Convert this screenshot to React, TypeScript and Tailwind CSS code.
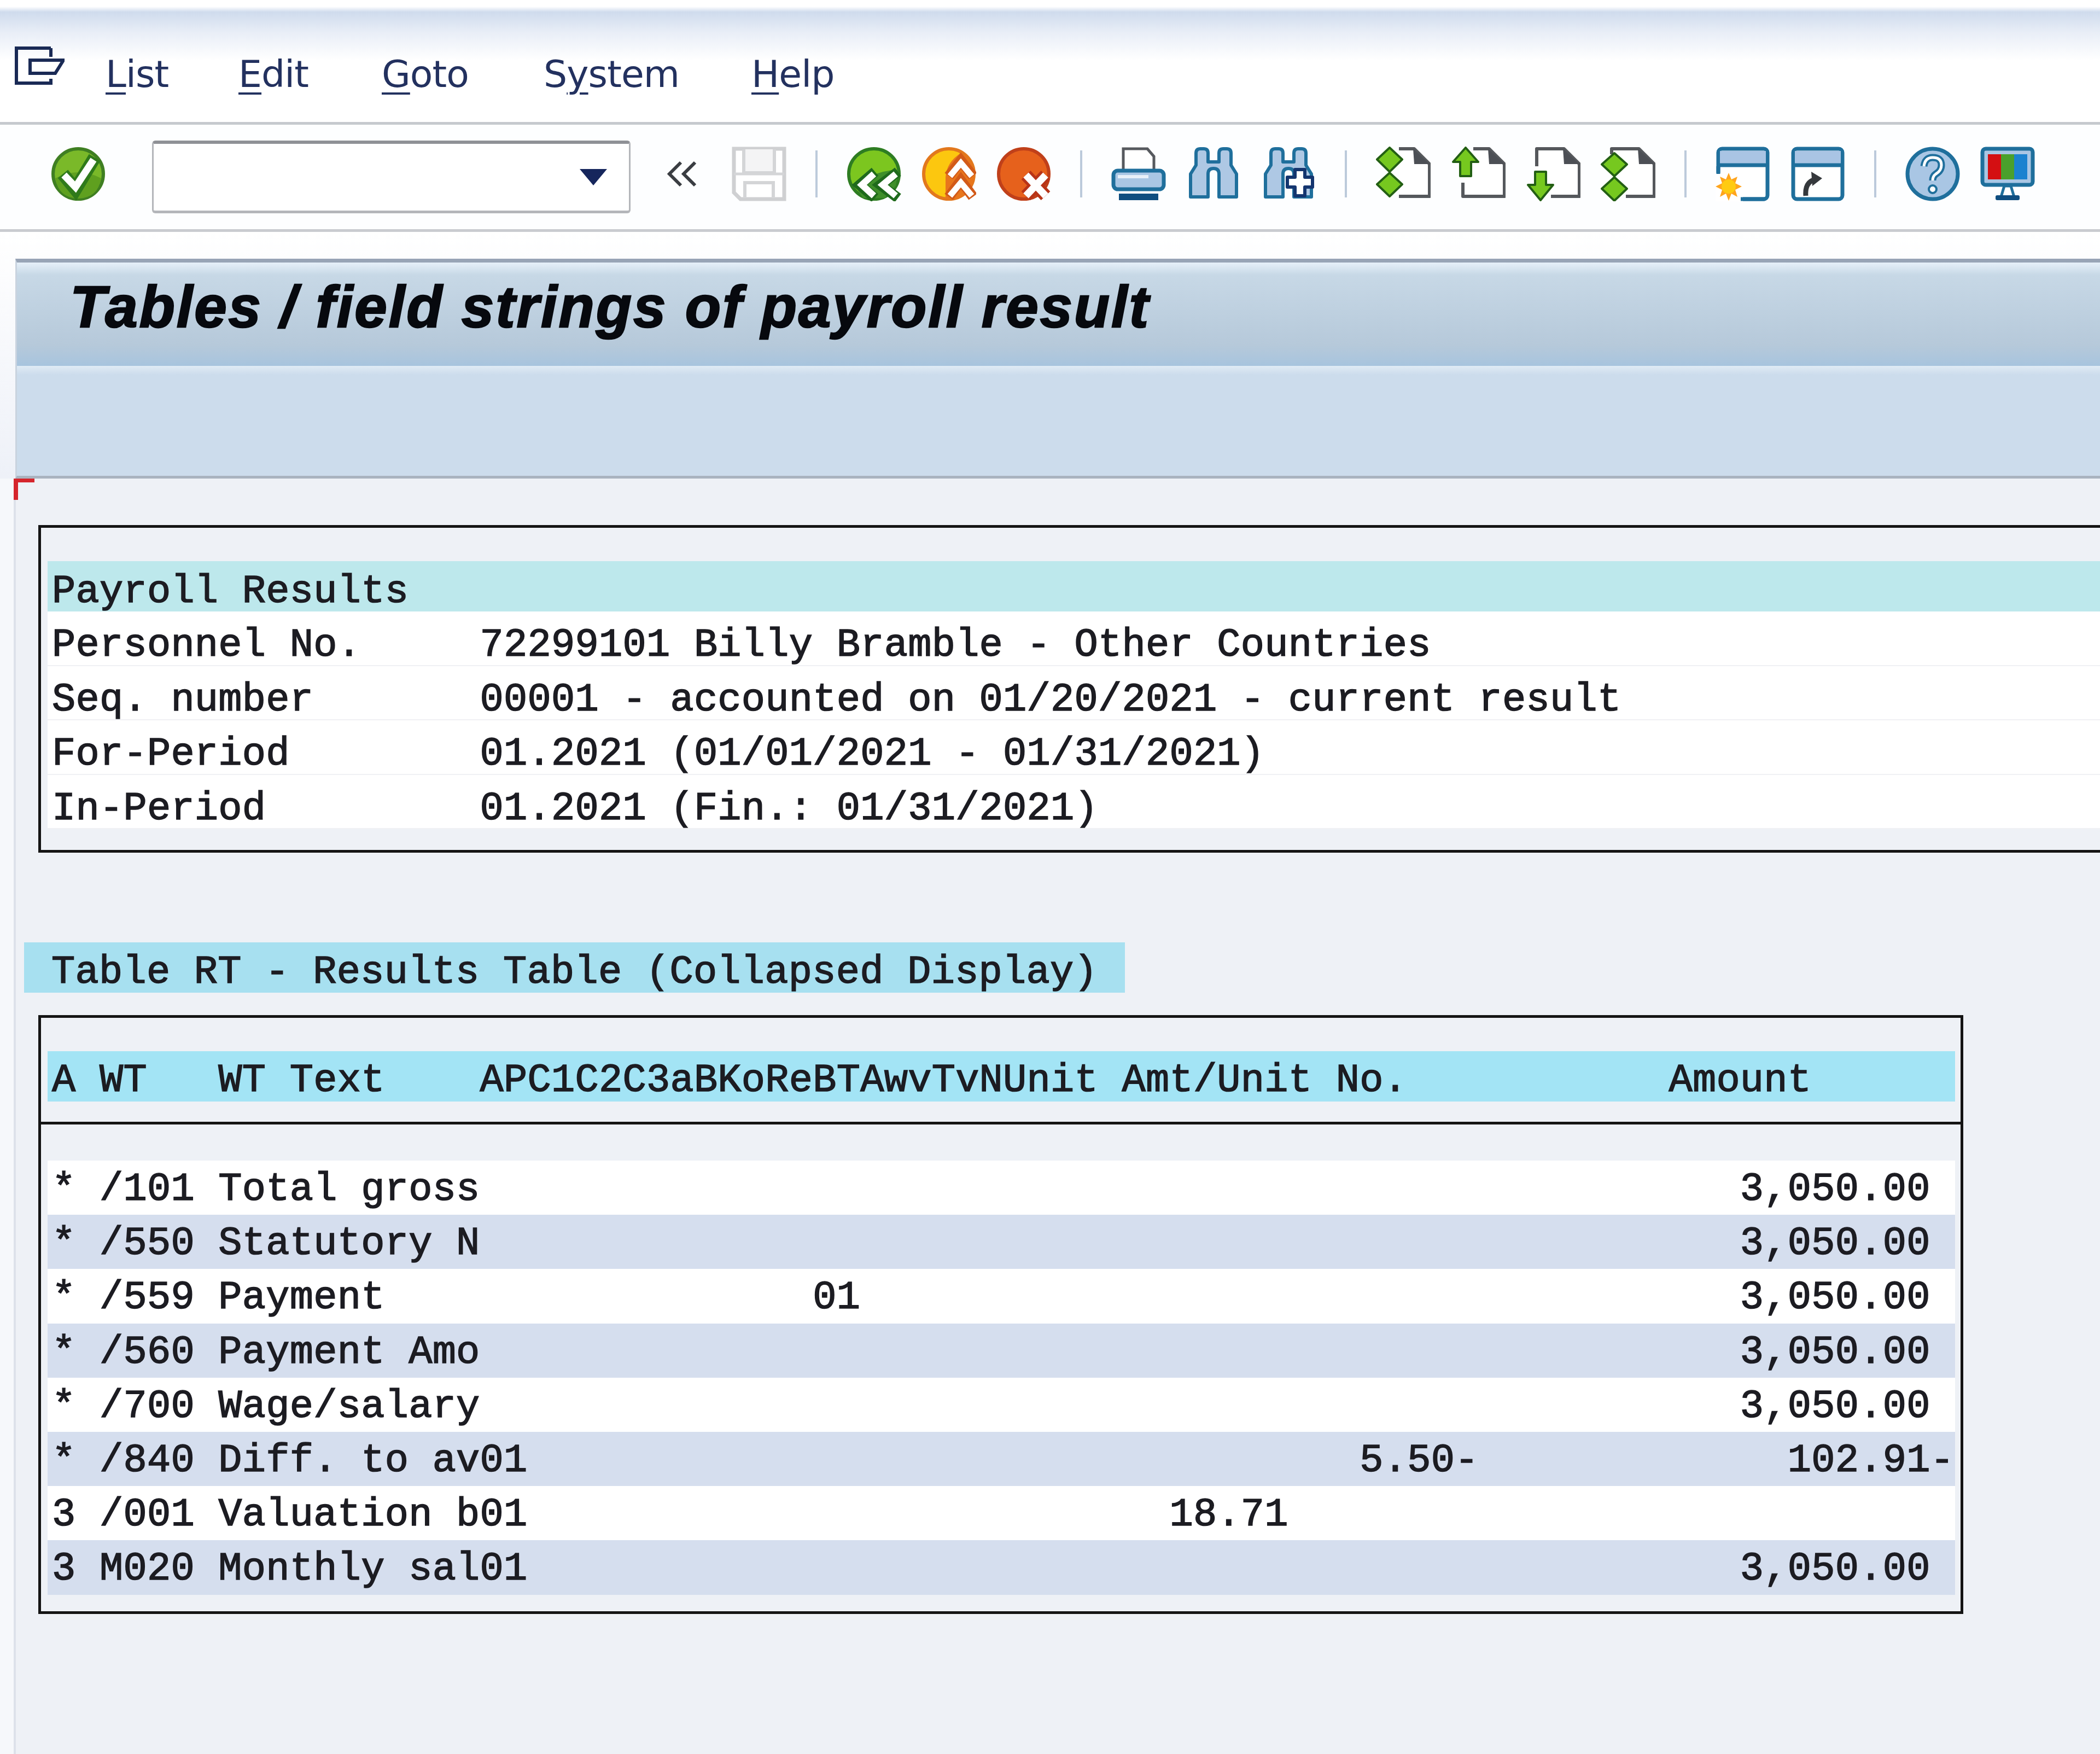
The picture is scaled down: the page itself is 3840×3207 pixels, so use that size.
import React from "react";

const Ic = ({ children }: { children: React.ReactNode }) => (
  <svg viewBox="0 0 100 100" className="w-[100px] h-[100px] shrink-0 mb-[12px]" fill="none">
    {children}
  </svg>
);

const Sep = () => <div className="w-[4px] h-[86px] mx-[53px] mb-[12px] bg-[#bccadb] shrink-0" />;

const Group = ({ children }: { children: React.ReactNode }) => (
  <div className="flex items-center gap-[37px] shrink-0">{children}</div>
);

const Fold = () => <path d="M68 4L98 32H70Z" fill="#4c4f55" />;
const docStroke = { stroke: "#55585c", strokeWidth: 6, strokeLinejoin: "round" as const };

const green = { fill: "#76c81f", stroke: "#235f14", strokeWidth: 4, strokeLinejoin: "round" as const };

const Diamond = ({ top, bot }: { top: number; bot: number }) => {
  const m = (top + bot) / 2;
  return <path d={`M25 ${top + 2}L48 ${m}L25 ${bot - 1}L2 ${m}Z`} {...green} />;
};

const Binoc = ({ plus }: { plus?: boolean }) => (
  <>
    <path
      d="M8 92V50L18 34V12Q18 4 26 4H32Q40 4 40 12V28H60V12Q60 4 68 4H74Q82 4 82 12V34L92 50V92H60V50Q60 40 50 40Q40 40 40 50V92Z"
      fill="#aec8e4"
      stroke="#1f6f9c"
      strokeWidth="6"
      strokeLinejoin="round"
    />
    {plus && (
      <path
        d="M62 42H80V56H94V74H80V90H62V74H48V56H62Z"
        fill="#fff"
        stroke="#14356f"
        strokeWidth="6"
        strokeLinejoin="round"
      />
    )}
  </>
);

const Win = () => (
  <>
    <rect x="5" y="4" width="90" height="92" rx="7" fill="#fff" stroke="#1f6f9c" strokeWidth="7" />
    <rect x="8" y="8" width="84" height="26" fill="#a9c4e4" />
    <path d="M5 34H95" stroke="#1f6f9c" strokeWidth="7" />
  </>
);

const u = "underline decoration-[4px] underline-offset-[10px]";

const infoRows = [
  "Personnel No.     72299101 Billy Bramble - Other Countries",
  "Seq. number       00001 - accounted on 01/20/2021 - current result",
  "For-Period        01.2021 (01/01/2021 - 01/31/2021)",
  "In-Period         01.2021 (Fin.: 01/31/2021)",
];

const tableRows = [
  "* /101 Total gross                                                     3,050.00",
  "* /550 Statutory N                                                     3,050.00",
  "* /559 Payment                  01                                     3,050.00",
  "* /560 Payment Amo                                                     3,050.00",
  "* /700 Wage/salary                                                     3,050.00",
  "* /840 Diff. to av01                                   5.50-             102.91-",
  "3 /001 Valuation b01                           18.71",
  "3 M020 Monthly sal01                                                   3,050.00",
];

const mono =
  "font-['Liberation_Mono',monospace] text-[72px] tracking-[0.27px] whitespace-pre text-[#1c1c22] [-webkit-text-stroke:1.6px_#1c1c22]";

export default function App() {
  return (
    <div className="w-[3840px] h-[3207px] overflow-hidden flex flex-col bg-[#f6f8fb]">
      {/* Menu bar */}
      <div className="h-[228px] shrink-0 border-b-[5px] border-[#c5c9ce] bg-[linear-gradient(180deg,#ffffff_0px,#ffffff_12px,#cfdbed_22px,#e9eef7_60px,#ffffff_110px)] flex items-center pl-[25px] pt-[46px]">
        <svg viewBox="0 0 93 72" className="w-[93px] h-[72px] shrink-0 -mt-[30px]" fill="none">
          <path d="M68 4H5V68H68V60" stroke="#1a2a55" strokeWidth="6" />
          <path d="M30 26H91L76 50H30Z" stroke="#1a2a55" strokeWidth="6" fill="#fff" />
          <path d="M68 4V20" stroke="#1a2a55" strokeWidth="6" />
        </svg>
        <div className="ml-[75px] flex font-['DejaVu_Sans',sans-serif] text-[68px] leading-none text-[#23315f] tracking-[-0.9px] mt-[2px]">
          <div className="w-[243px]"><span className={u}>L</span>ist</div>
          <div className="w-[262px]"><span className={u}>E</span>dit</div>
          <div className="w-[296px]"><span className={u}>G</span>oto</div>
          <div className="w-[380px]">S<span className={u}>y</span>stem</div>
          <div><span className={u}>H</span>elp</div>
        </div>
      </div>

      {/* Application toolbar */}
      <div className="h-[196px] shrink-0 border-b-[5px] border-[#c9cbd0] bg-[#fdfeff] flex items-center pl-[93px]">
        <Ic>
          <circle cx="50" cy="50" r="46" fill="#7ab929" stroke="#3f7f22" strokeWidth="6" />
          <path d="M8 58Q50 36 92 58Q86 94 50 95Q14 94 8 58Z" fill="#5fa01f" />
          <path d="M22 50L45 78L80 20" stroke="#2f7a1a" strokeWidth="24" strokeLinejoin="miter" />
          <path d="M24 52L45 74L78 24" stroke="#fff" strokeWidth="13" strokeLinejoin="miter" />
        </Ic>
        <div className="w-[875px] h-[133px] ml-[85px] shrink-0 bg-white rounded-[6px] border-[3px] border-[#b4b6ba] border-t-[6px] border-t-[#8f9196] border-b-[5px] flex items-center justify-end pr-[40px]">
          <div className="w-0 h-0 border-l-[25px] border-r-[25px] border-t-[30px] border-l-transparent border-r-transparent border-t-[#16265c]" />
        </div>
        <svg viewBox="0 0 58 48" className="w-[58px] h-[48px] ml-[65px] mb-[12px] shrink-0" fill="none">
          <path d="M27 3L6 24L27 45M53 3L32 24L53 45" stroke="#3a3d42" strokeWidth="6" />
        </svg>
        <div className="ml-[62px] shrink-0 flex">
          <Ic>
            <path d="M4 4H96V96H16L4 84Z" stroke="#cfd0d2" strokeWidth="7" fill="#fff" />
            <path d="M22 5V48H78V5" stroke="#d4d5d7" strokeWidth="6" fill="#f4f4f5" />
            <path d="M4 50H96" stroke="#d4d5d7" strokeWidth="5" />
            <path d="M24 94V66H76V94" stroke="#d4d5d7" strokeWidth="6" />
          </Ic>
        </div>
        <Sep />
        <Group>
          <Ic>
            <circle cx="50" cy="50" r="46" fill="#7cc61f" stroke="#2e7d22" strokeWidth="6" />
            <path d="M18 76Q40 46 94 42L90 72L70 94H30Z" fill="#3f8f2a" />
            <path d="M52 46L24 70L52 94M94 46L62 70L94 94" stroke="#1f6a1c" strokeWidth="19" />
            <path d="M50 50L28 70L50 90M90 50L66 70L90 90" stroke="#fff" strokeWidth="12" />
          </Ic>
          <Ic>
            <circle cx="50" cy="50" r="46" fill="#fcc70f" stroke="#e2781d" strokeWidth="6" />
            <path d="M72 12Q96 26 96 52Q96 84 66 96H44V56Q46 28 72 12Z" fill="#e8761c" />
            <path d="M50 54L72 26L94 54M50 92L72 62L94 92" stroke="#d25a18" strokeWidth="19" />
            <path d="M52 54L72 30L92 54M52 90L72 66L92 90" stroke="#fff" strokeWidth="11" />
          </Ic>
          <Ic>
            <circle cx="50" cy="50" r="46" fill="#e6611c" stroke="#c0401a" strokeWidth="6" />
            <path d="M54 52L90 90M90 52L54 90" stroke="#b83418" strokeWidth="23" />
            <path d="M54 52L90 90M90 52L54 90" stroke="#fff" strokeWidth="13" />
          </Ic>
        </Group>
        <Sep />
        <Group>
          <Ic>
            <path d="M22 44V4H66L78 18V44" stroke="#56595e" strokeWidth="5" fill="#fff" />
            <rect x="4" y="44" width="92" height="34" rx="8" fill="#a9c6e4" stroke="#1f6f9c" strokeWidth="7" />
            <rect x="12" y="52" width="56" height="6" fill="#e7eff8" />
            <rect x="14" y="86" width="72" height="12" fill="#0f4e80" />
          </Ic>
          <Ic><Binoc /></Ic>
          <Ic><Binoc plus /></Ic>
        </Group>
        <Sep />
        <Group>
          <Ic>
            <path d="M42 4H70L98 32V91H42" {...docStroke} fill="#fff" />
            <Fold />
            <Diamond top={0} bot={47} />
            <Diamond top={46} bot={92} />
          </Ic>
          <Ic>
            <path d="M41 4H70L98 32V91H22V66" {...docStroke} fill="#fff" />
            <Fold />
            <path d="M27 2L50 28H37V54H17V28H4Z" {...green} />
          </Ic>
          <Ic>
            <path d="M20 36V4H70L98 32V91H46" {...docStroke} fill="#fff" />
            <Fold />
            <path d="M17 46H37V70H50L27 98L4 70H17Z" {...green} />
          </Ic>
          <Ic>
            <path d="M20 14V4H70L98 32V91H46" {...docStroke} fill="#fff" />
            <Fold />
            <Diamond top={10} bot={55} />
            <Diamond top={54} bot={100} />
          </Ic>
        </Group>
        <Sep />
        <Group>
          <Ic>
            <Win />
            <rect x="0" y="48" width="46" height="52" fill="#fff" />
            <path d="M5 36V50" stroke="#1f6f9c" strokeWidth="7" />
            <path d="M50 96H90" stroke="#1f6f9c" strokeWidth="7" />
            <path d="M24 48L29 60L40 55L36 67L48 73L36 79L40 92L29 86L24 99L19 86L8 92L12 79L0 73L12 67L8 55L19 60Z" fill="#ffa51e" />
            <circle cx="24" cy="73" r="13" fill="#ffcb12" />
          </Ic>
          <Ic>
            <Win />
            <path d="M28 90Q26 66 44 60" stroke="#35383c" strokeWidth="9" />
            <path d="M38 46L58 58L40 72Z" fill="#35383c" />
          </Ic>
        </Group>
        <Sep />
        <Group>
          <Ic>
            <circle cx="50" cy="50" r="46" fill="#a9c6e4" stroke="#1f6f9c" strokeWidth="7" />
            <path d="M34 36Q36 20 50 20Q66 20 66 34Q66 44 56 50Q50 54 50 62" stroke="#1f6f9c" strokeWidth="13" />
            <path d="M34 36Q36 20 50 20Q66 20 66 34Q66 44 56 50Q50 54 50 62" stroke="#fff" strokeWidth="5" />
            <circle cx="50" cy="78" r="7" fill="#fff" stroke="#1f6f9c" strokeWidth="4" />
          </Ic>
          <Ic>
            <rect x="4" y="4" width="92" height="66" rx="6" fill="#a9c6e4" stroke="#1f6f9c" strokeWidth="7" />
            <rect x="14" y="14" width="24" height="46" fill="#d40f12" />
            <rect x="38" y="14" width="24" height="46" fill="#4aa02c" />
            <rect x="62" y="14" width="24" height="46" fill="#1a82d0" />
            <path d="M44 72L38 92H62L56 72Z" fill="#fff" stroke="#1f6f9c" strokeWidth="5" />
            <rect x="28" y="89" width="44" height="9" rx="3" fill="#0f4e80" />
          </Ic>
        </Group>
      </div>

      {/* Title area */}
      <div className="pl-[28px] shrink-0 pt-[49px] bg-[linear-gradient(180deg,#ffffff_0%,#eef1f8_100%)]">
        <div className="border-l-[3px] border-l-[#c9d3df] border-t-[7px] border-t-[#98a4b6] h-[196px] bg-[linear-gradient(180deg,#e6f0f9_0%,#c7d8e6_12%,#b6c9da_80%,#a7c4de_100%)] flex items-center pl-[97px] pb-[26px]">
          <span className="font-['Liberation_Sans',sans-serif] font-bold italic text-[107px] tracking-[2.8px] text-[#07090e] [-webkit-text-stroke:2.5px_#07090e]">
            Tables / field strings of payroll result
          </span>
        </div>
        <div className="h-[206px] border-l-[3px] border-l-[#c9d3df] bg-[linear-gradient(180deg,#e0ebf5_0px,#ccdcec_16px)] border-b-[5px] border-b-[#a9b3bf]" />
      </div>

      {/* Content */}
      <div className="relative flex-1 ml-[25px] border-l-[4px] border-l-[#dde1ea] bg-[#eef1f6] flex flex-col">
        <div className="absolute -left-[4px] top-0 w-[38px] h-[39px] border-t-[7px] border-l-[8px] border-[#d5252c]" />

        <div className="mt-[85px] ml-[41px] w-[3900px] border-[5px] border-[#141414] pl-[12px] pt-[61px] pb-[38px]">
          <div className={`h-[92px] bg-[#bde8ec] pl-[8px] leading-[112px] ${mono}`}>Payroll Results</div>
          {infoRows.map((r) => (
            <div key={r} className={`h-[99.5px] leading-[124px] bg-white border-b-[2px] border-b-[#f0f1f4] pl-[8px] ${mono}`}>
              {r}
            </div>
          ))}
        </div>

        <div className={`mt-[164px] ml-[15px] w-[2013px] h-[92px] bg-[#a7e0f0] pl-[50px] leading-[110px] ${mono}`}>
          Table RT - Results Table (Collapsed Display)
        </div>

        <div className="mt-[41px] ml-[41px] w-[3520px] border-[5px] border-[#141414]">
          <div className="pt-[61px] pb-[37px] pl-[12px] pr-[10px] border-b-[5px] border-b-[#141414]">
            <div className={`h-[92px] bg-[#a3e4f5] pl-[8px] leading-[108px] ${mono}`}>
              A WT   WT Text    APC1C2C3aBKoReBTAwvTvNUnit Amt/Unit No.           Amount
            </div>
          </div>
          <div className="pt-[66px] pb-[30px] pl-[12px] pr-[10px]">
            {tableRows.map((r, i) => (
              <div
                key={r}
                className={`h-[99.2px] leading-[106px] pl-[8px] ${mono} ${i % 2 === 0 ? "bg-white" : "bg-[#d5deee]"}`}
              >
                {r}
              </div>
            ))}
          </div>
        </div>
      </div>
    </div>
  );
}
